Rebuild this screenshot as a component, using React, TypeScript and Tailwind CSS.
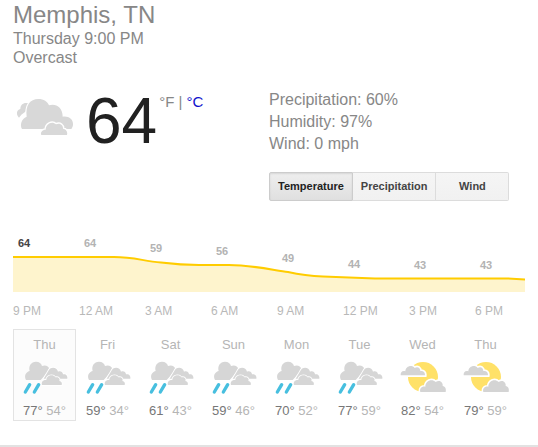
import { useState } from 'react';

interface Hour {
  time: string;
  temp: number;
  x: number;
  y: number;
}

interface Day {
  name: string;
  high: number;
  low: number;
  icon: 'rain' | 'sun';
}

const hours: Hour[] = [
  { time: '9 PM', temp: 64, x: 11, y: 15 },
  { time: '12 AM', temp: 64, x: 77, y: 15 },
  { time: '3 AM', temp: 59, x: 143, y: 20 },
  { time: '6 AM', temp: 56, x: 209, y: 23 },
  { time: '9 AM', temp: 49, x: 275, y: 30 },
  { time: '12 PM', temp: 44, x: 341, y: 36 },
  { time: '3 PM', temp: 43, x: 407, y: 37 },
  { time: '6 PM', temp: 43, x: 473, y: 37 },
];

const days: Day[] = [
  { name: 'Thu', high: 77, low: 54, icon: 'rain' },
  { name: 'Fri', high: 59, low: 34, icon: 'rain' },
  { name: 'Sat', high: 61, low: 43, icon: 'rain' },
  { name: 'Sun', high: 59, low: 46, icon: 'rain' },
  { name: 'Mon', high: 70, low: 52, icon: 'rain' },
  { name: 'Tue', high: 77, low: 59, icon: 'rain' },
  { name: 'Wed', high: 82, low: 54, icon: 'sun' },
  { name: 'Thu', high: 79, low: 59, icon: 'sun' },
];

const tabs = ['Temperature', 'Precipitation', 'Wind'];

function OvercastIcon() {
  return (
    <svg viewBox="21 24 171 114" className="w-[57px] h-[38px]" role="img" aria-label="Overcast">
      <path d="M27 83C18 75 18 61 31 57C31 43 42 36 55 40L50 62L34 74Z" fill="#d8d8d8" />
      <path
        d="M36 117C29 104 34 87 50 80C46 46 60 27 85 27C101 27 113 35 117 46C138 40 158 52 158 80C175 77 190 87 189 103C189 109 187 113 184 117Z"
        fill="#d8d8d8"
        stroke="#fff"
        strokeWidth="7"
        paintOrder="stroke"
      />
      <path
        d="M94 135C90 127 97 119 107 119C107 102 126 91 138 103C151 97 160 107 159 116C168 117 174 126 171 135Z"
        fill="#d8d8d8"
        stroke="#fff"
        strokeWidth="8"
        paintOrder="stroke"
      />
    </svg>
  );
}

function RainIcon() {
  return (
    <svg viewBox="64 108 144 102" className="w-[48px] h-[34px]" role="img" aria-label="Rain">
      <path
        d="M79 165C73 153 77 142 90 138C86 123 94 110 109 110C119 110 125 115 127 123C137 119 147 123 150 133L132 155L123 165Z"
        fill="#d6d6d6"
      />
      <path
        d="M132 161L146 138C150 125 172 124 175 140C183 137 189 141 190 148C198 146 205 152 203 161Z"
        fill="#d6d6d6"
        stroke="#fff"
        strokeWidth="5"
        paintOrder="stroke"
      />
      <path
        d="M127 180C124 171 130 164 140 165C140 151 160 146 167 157C177 155 182 162 179 168C186 169 188 175 186 180Z"
        fill="#d6d6d6"
        stroke="#fff"
        strokeWidth="5"
        paintOrder="stroke"
      />
      <path d="M90 179L77 201M117 179L104 201" stroke="#47bfdf" strokeWidth="10" strokeLinecap="round" />
    </svg>
  );
}

function SunIcon() {
  return (
    <svg viewBox="27 108 144 102" className="w-[48px] h-[34px]" role="img" aria-label="Partly cloudy">
      <circle cx="99" cy="156" r="45" fill="#ffe168" />
      <path
        d="M32 151C31 142 37 136 46 139C46 125 65 117 74 129C83 123 91 129 91 138C100 136 106 143 105 151Z"
        fill="#d4d4d4"
        stroke="#fff"
        strokeWidth="10"
        paintOrder="stroke"
      />
      <path
        d="M91 201C88 191 95 183 106 185C106 168 125 159 137 171C150 162 160 173 158 183C166 184 169 192 167 201Z"
        fill="#d4d4d4"
        stroke="#fff"
        strokeWidth="9"
        paintOrder="stroke"
      />
    </svg>
  );
}

function TemperatureChart() {
  const line =
    'M0 25H101C121 25 130 29 148 30.500C160 32 172 33 186 33H216C238 33 260 38 275 40C288 43 294 44 310 44.500L362 46.500H495L512 47.500';
  return (
    <svg viewBox="0 0 512 60" className="block w-full">
      <path d={`${line}V60H0Z`} fill="#fef4cd" />
      <path d={line} fill="none" stroke="#fc0" strokeWidth="2" />
      {hours.map((hour, i) => (
        <text
          key={hour.time}
          x={hour.x}
          y={hour.y}
          textAnchor="middle"
          className={i === 0 ? 'text-[11px] font-bold fill-[#444]' : 'text-[11px] font-bold fill-[#b3b3b3]'}
        >
          {hour.temp}
        </text>
      ))}
    </svg>
  );
}

export default function App() {
  const [tab, setTab] = useState('Temperature');
  const [selected, setSelected] = useState(0);

  return (
    <main className="border-b-2 border-[#e2e2e2] bg-white pb-6 font-['Liberation_Sans',Arial,sans-serif] text-[#878787]">
      <header className="px-[13px] pt-px">
        <h1 className="text-2xl leading-7">Memphis, TN</h1>
        <p className="text-base leading-[19px]">Thursday 9:00 PM</p>
        <p className="text-base leading-[19px]">Overcast</p>
      </header>

      <section className="grid grid-cols-2 pt-[22px]">
        <div className="flex items-start pl-[17px]">
          <div className="pt-[9px]">
            <OvercastIcon />
          </div>
          <span className="pl-3 text-[64px] leading-[64px] text-[#212121]">64</span>
          <span className="pl-[2px] pt-1 text-[15px] leading-[18px]">
            °F | <a href="#celsius" className="text-[#1111cc]">°C</a>
          </span>
        </div>
        <div>
          <div className="text-base leading-[22px]">
            <p>Precipitation: 60%</p>
            <p>Humidity: 97%</p>
            <p>Wind: 0 mph</p>
          </div>
          <div className="mt-[17px] flex">
            {tabs.map((name) => (
              <button
                key={name}
                type="button"
                aria-pressed={tab === name}
                onClick={() => setTab(name)}
                className={
                  tab === name
                    ? 'h-[29px] min-w-[73px] border border-[#ccc] bg-linear-to-b from-[#eee] to-[#e0e0e0] px-2 text-[11px] font-bold text-[#222] shadow-[inset_0_1px_2px_rgba(0,0,0,0.1)] first:rounded-l-xs'
                    : 'h-[29px] min-w-[73px] border border-l-0 border-[#dcdcdc] bg-linear-to-b from-[#f5f5f5] to-[#f1f1f1] px-2 text-[11px] font-bold text-[#444] last:rounded-r-xs'
                }
              >
                {name}
              </button>
            ))}
          </div>
        </div>
      </section>

      <section className="px-[13px] pt-[31px]">
        <TemperatureChart />
        <div className="mt-[11px] grid grid-cols-[repeat(7,66fr)_50fr] text-xs leading-4 whitespace-nowrap text-[#b8b8b8]">
          {hours.map((hour) => (
            <span key={hour.time}>{hour.time}</span>
          ))}
        </div>
      </section>

      <section className="mt-[10px] grid grid-cols-8 pl-[13px] pr-[21px]">
        {days.map((day, i) => (
          <button
            key={i}
            type="button"
            onClick={() => setSelected(i)}
            className={
              selected === i
                ? 'flex h-[92px] flex-col items-center border border-[#e3e3e3] bg-[#fcfcfc] pt-[6px] text-[13px] leading-[18px]'
                : 'flex h-[92px] flex-col items-center border border-transparent pt-[6px] text-[13px] leading-[18px]'
            }
          >
            <span className="text-[#b5b5b5]">{day.name}</span>
            <span className="mt-[7px]">{day.icon === 'rain' ? <RainIcon /> : <SunIcon />}</span>
            <span className="mt-[7px] whitespace-nowrap text-[#777]">
              {day.high}° <span className="text-[#b5b5b5]">{day.low}°</span>
            </span>
          </button>
        ))}
      </section>
    </main>
  );
}
